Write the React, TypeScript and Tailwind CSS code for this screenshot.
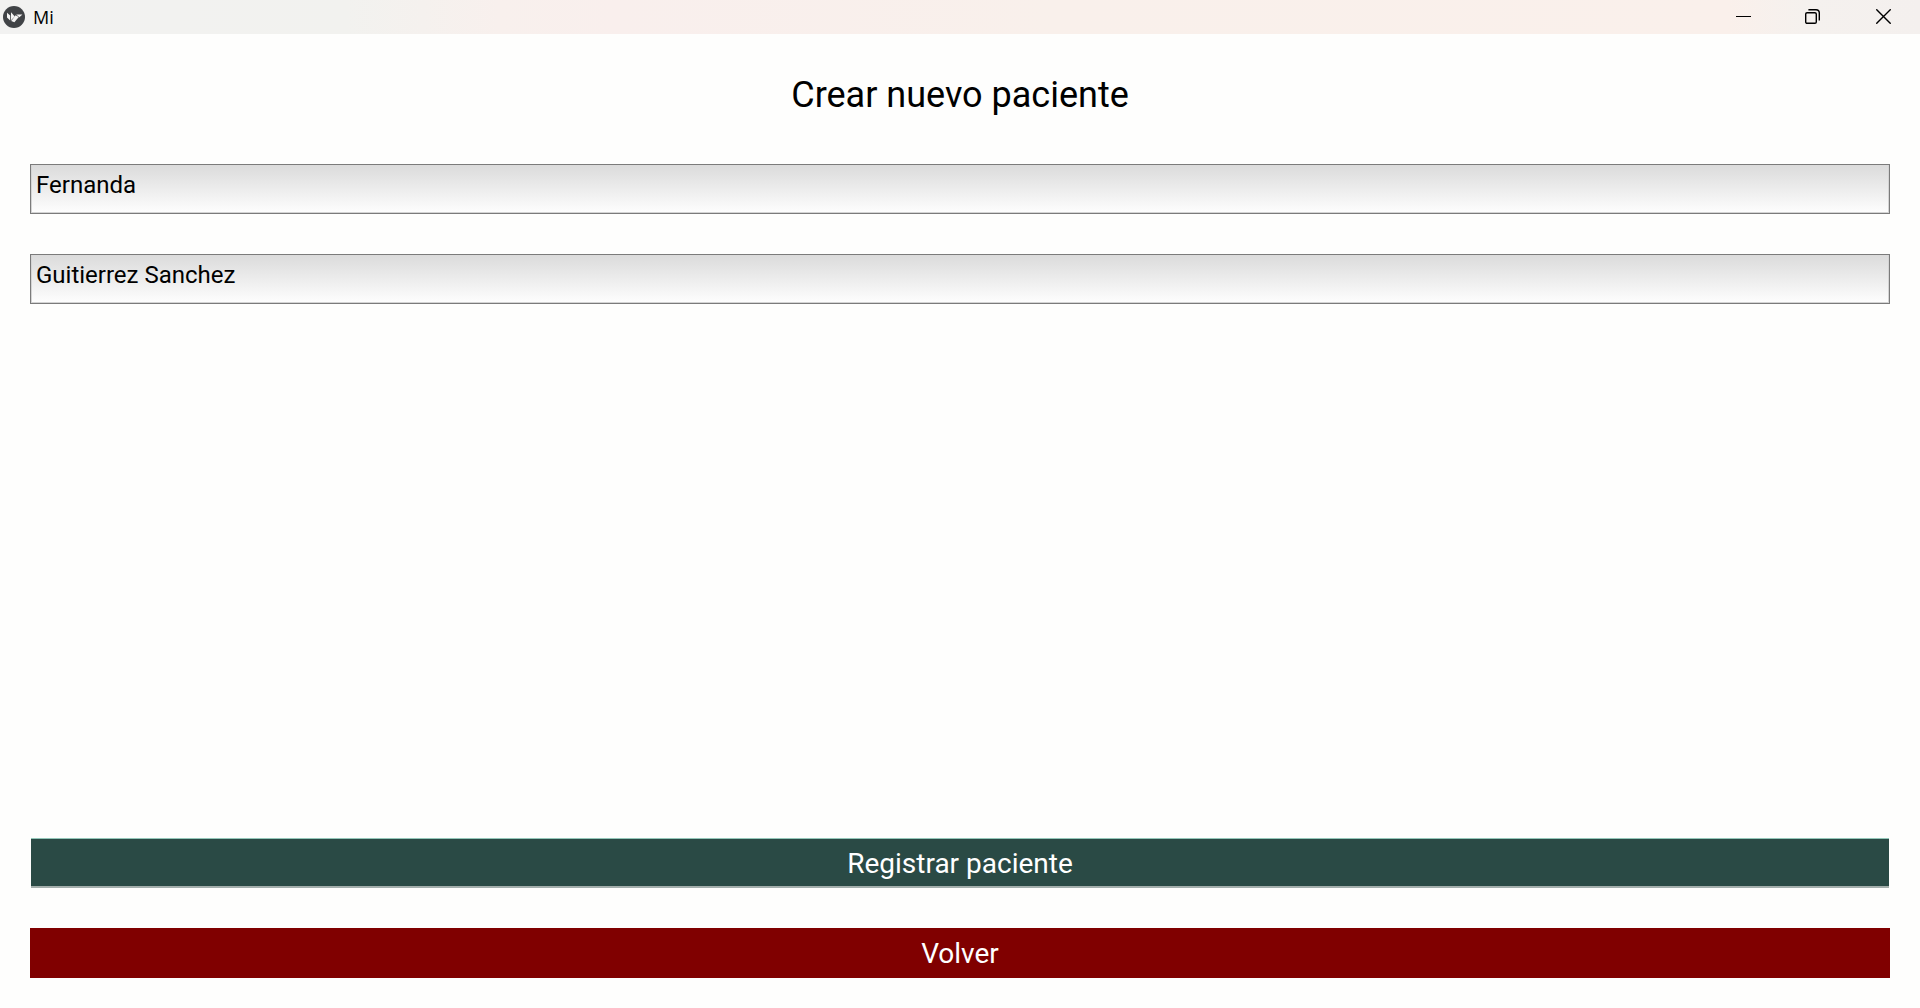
import { useState } from "react";

const fieldClass =
  "block w-full rounded-none border border-[#7b7b7b] bg-linear-to-b from-[#dbdbdb] to-[#fefefe] px-[5px] pt-1.5 pb-3.5 text-2xl leading-7 text-black shadow-[inset_-1px_-1px_0_#d4d4d4,inset_1px_0_0_#d4d4d4] outline-none";

function TitleBar() {
  return (
    <header className="flex h-[34px] shrink-0 items-center justify-between bg-[linear-gradient(90deg,#f2f2f1_0%,#f2f2ef_18%,#f8f0ed_26%,#f9efed_32%,#f9f0eb_55%,#faf0eb_90%,#f5f1ee_94%,#f4f0ee_100%)]">
      <div className="flex items-center gap-2 pl-[3px]">
        <svg width="22" height="22" viewBox="0 0 22 22" aria-hidden="true">
          <circle cx="11" cy="11" r="11" fill="#404346" />
          <path d="M4 6.8 7.2 9.6V14.6L4 11.4Z" fill="#f4f4f4" />
          <path d="M8 6.2 11.8 10.4 8 14.2Z" fill="#f4f4f4" />
          <path d="M8.2 15 12.6 9.2 15.8 11 11.4 16.2Z" fill="#f4f4f4" />
          <path d="M13.2 8.4H19.4L16.4 11.2Z" fill="#f4f4f4" />
        </svg>
        <span className="font-['Open_Sans',sans-serif] text-lg leading-6 text-black">Mi</span>
      </div>
      <div className="flex h-full pb-px">
        <button type="button" aria-label="Minimizar" className="flex w-[69px] items-center justify-center">
          <svg width="15" height="15" viewBox="0 0 15 15" stroke="#000" fill="none">
            <path d="M0 7.5H15" />
          </svg>
        </button>
        <button type="button" aria-label="Restaurar" className="flex w-[69px] items-center justify-center">
          <svg width="15" height="15" viewBox="0 0 15 15" stroke="#000" fill="none" strokeWidth="1.4">
            <rect x="0.7" y="3.7" width="10.6" height="10.6" rx="1.4" />
            <path d="M3.4 0.7H11a3.3 3.3 0 0 1 3.3 3.3V11.6" />
          </svg>
        </button>
        <button type="button" aria-label="Cerrar" className="flex w-[73px] items-center justify-center">
          <svg width="15" height="15" viewBox="0 0 15 15" stroke="#000" fill="none" strokeWidth="1.4">
            <path d="M0.3 0.3 14.7 14.7M14.7 0.3 0.3 14.7" />
          </svg>
        </button>
      </div>
    </header>
  );
}

export default function App() {
  const [name, setName] = useState("Fernanda");
  const [surname, setSurname] = useState("Guitierrez Sanchez");

  return (
    <div className="flex min-h-screen flex-col bg-[#fefefd] font-[Roboto,sans-serif]">
      <TitleBar />
      <main className="flex grow flex-col p-[30px]">
        <h1 className="text-center text-4xl leading-[62px] text-black">Crear nuevo paciente</h1>
        <form className="mt-[38px] flex grow flex-col gap-10" onSubmit={(e) => e.preventDefault()}>
          <input
            aria-label="Nombre"
            className={fieldClass}
            value={name}
            onChange={(e) => setName(e.target.value)}
          />
          <input
            aria-label="Apellidos"
            className={fieldClass}
            value={surname}
            onChange={(e) => setSurname(e.target.value)}
          />
          <button
            type="submit"
            className="mx-px mt-auto h-[50px] border-t border-b-2 border-t-[#93c7b9] border-b-[#a3aeab] bg-[#2a4a45] pt-0.5 text-[28px] leading-8 text-white"
          >
            Registrar paciente
          </button>
          <button type="button" className="h-[50px] bg-[#800000] pt-0.5 text-[28px] leading-8 text-white">
            Volver
          </button>
        </form>
      </main>
    </div>
  );
}
